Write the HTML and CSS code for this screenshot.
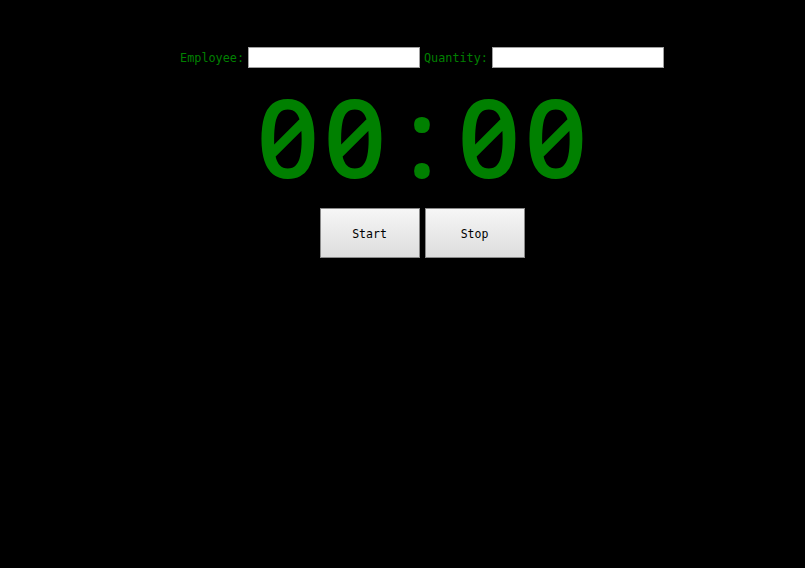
FILE: index.html
```html
<!DOCTYPE html>
<html>
<head>
<meta charset="utf-8">
<link rel="stylesheet" href="styles.css">
</head>
<body>
<div class="wrap">
  <div class="fields">
    <label class="lbl">Employee:</label>
    <input class="inp" type="text">
    <label class="lbl">Quantity:</label>
    <input class="inp" type="text">
  </div>
  <div class="timer"><span class="ch">0</span><span class="ch">0</span><span class="ch">:</span><span class="ch">0</span><span class="ch">0</span></div>
  <div class="buttons">
    <button class="btn">Start</button>
    <button class="btn">Stop</button>
  </div>
</div>
</body>
</html>
```
FILE: styles.css
```css
html, body {
  margin: 0;
  padding: 0;
  background: #000;
  height: 100%;
}
.wrap {
  display: flex;
  flex-direction: column;
  align-items: center;
  padding-left: 39px;
  padding-top: 47px;
  font-family: "DejaVu Sans Mono", monospace;
}
.fields {
  display: flex;
  align-items: center;
  gap: 4px;
  height: 21px;
}
.lbl {
  color: #008000;
  font-size: 11.8px;
  line-height: 14px;
}
.inp {
  width: 172px;
  height: 21px;
  box-sizing: border-box;
  border: 1px solid #a0a0a0;
  background: #fff;
  margin: 0;
  padding: 0 2px;
}
.timer {
  color: #008000;
  display: flex;
  height: 134px;
  margin-top: 6px;
  font-family: "Open Sans", sans-serif;
  font-size: 109px;
  font-weight: 600;
  line-height: 123px;
  font-feature-settings: "zero" 1, "tnum" 1;
}
.ch {
  width: 67px;
  text-align: center;
}
.buttons {
  display: flex;
  gap: 5px;
}
.btn {
  width: 100px;
  height: 50px;
  box-sizing: border-box;
  border: 1px solid #8a8a8a;
  background: linear-gradient(#f6f6f6, #dddddd);
  font-family: "DejaVu Sans Mono", monospace;
  font-size: 11.5px;
  color: #000;
  margin: 0;
  padding: 2px 0 0;
}
```
